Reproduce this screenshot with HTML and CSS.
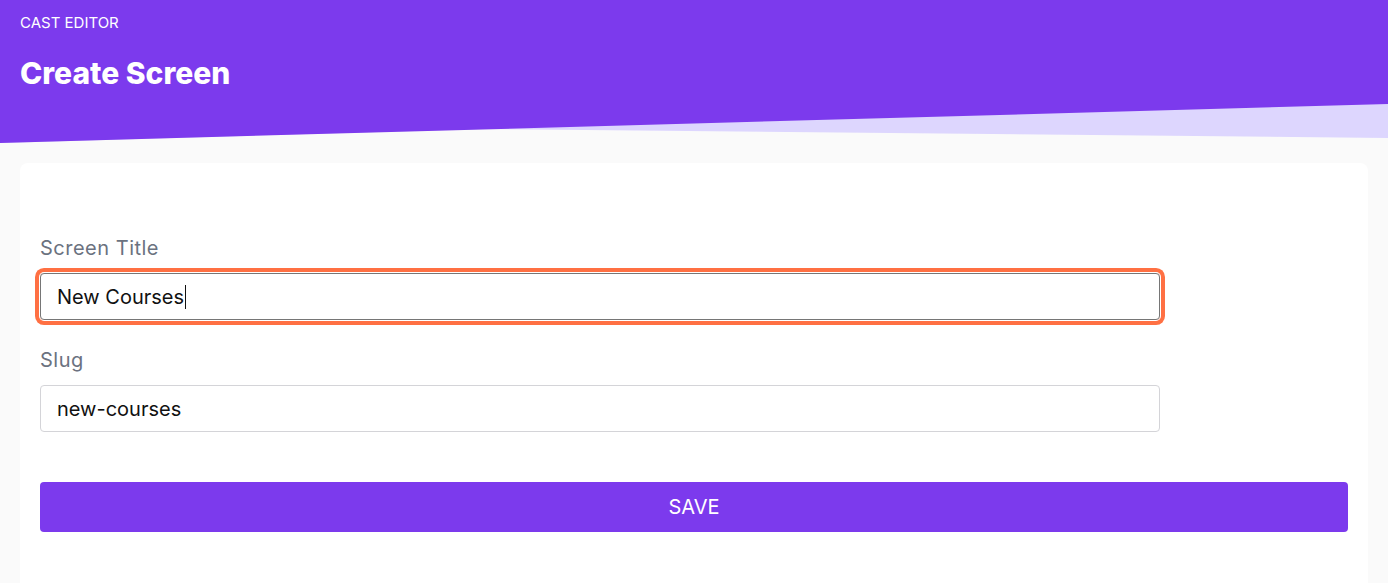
FILE: index.html
```html
<!DOCTYPE html>
<html lang="en">
<head>
<meta charset="utf-8">
<title>Create Screen</title>
<link rel="stylesheet" href="styles.css">
</head>
<body>
<header class="hero">
  <svg class="hero-bg" viewBox="0 0 1388 143" preserveAspectRatio="none" aria-hidden="true">
    <polygon points="0,0 1388,0 1388,138 480,129 0,143" fill="#ddd6fe"/>
    <polygon points="0,0 1388,0 1388,104 0,143" fill="#7c3aed"/>
  </svg>
  <div class="hero-text">
    <div class="eyebrow">CAST EDITOR</div>
    <h1 class="title">Create Screen</h1>
  </div>
</header>
<main class="card">
  <form class="form">
    <div class="field">
      <label class="label" for="title">Screen Title</label>
      <div class="input input-focus"><span>New Courses</span><span class="caret"></span></div>
    </div>
    <div class="field">
      <label class="label" for="slug">Slug</label>
      <div class="input"><span>new-courses</span></div>
    </div>
    <button type="button" class="save">SAVE</button>
  </form>
</main>
</body>
</html>
```
FILE: styles.css
```css
* { box-sizing: border-box; }
html, body { margin: 0; padding: 0; }
body {
  background: #fafafa;
  font-family: Inter, "Noto Sans", sans-serif;
  color: #111827;
  min-height: 583px;
}
.hero {
  position: relative;
  height: 143px;
}
.hero-bg {
  position: absolute;
  inset: 0;
  width: 100%;
  height: 100%;
  display: block;
}
.hero-text {
  position: relative;
  padding: 14px 20px 0;
  color: #fff;
}
.eyebrow {
  font-size: 15px;
  line-height: 18px;
}
.title {
  margin: 23px 0 0;
  font-size: 30px;
  line-height: 36px;
  font-weight: 800;
}
.card {
  margin: 20px 20px 0 20px;
  background: #fff;
  border-radius: 8px 8px 0 0;
  min-height: 420px;
  padding: 71px 20px 40px;
}
.form {
  display: flex;
  flex-direction: column;
}
.field {
  display: flex;
  flex-direction: column;
  gap: 11px;
  margin-bottom: 26px;
}
.label {
  font-size: 20px;
  line-height: 28px;
  color: #6b7280;
  letter-spacing: 0.5px;
}
.input {
  width: 1120px;
  height: 47px;
  border: 1px solid #d4d4d8;
  border-radius: 4px;
  padding: 0 16px;
  display: flex;
  align-items: center;
  font-size: 20px;
  color: #111;
}
.input-focus {
  border-color: #767676;
  box-shadow: 0 0 0 1px #fff, 0 0 0 5px #ff7043;
  border-radius: 4px;
}
.caret {
  display: inline-block;
  width: 1px;
  height: 24px;
  background: #111;
  margin-left: 1px;
}
.save {
  margin-top: 24px;
  height: 50px;
  width: 100%;
  border: 0;
  border-radius: 4px;
  background: #7c3aed;
  color: #fff;
  font-family: Inter, "Noto Sans", sans-serif;
  font-size: 20px;
}
```
